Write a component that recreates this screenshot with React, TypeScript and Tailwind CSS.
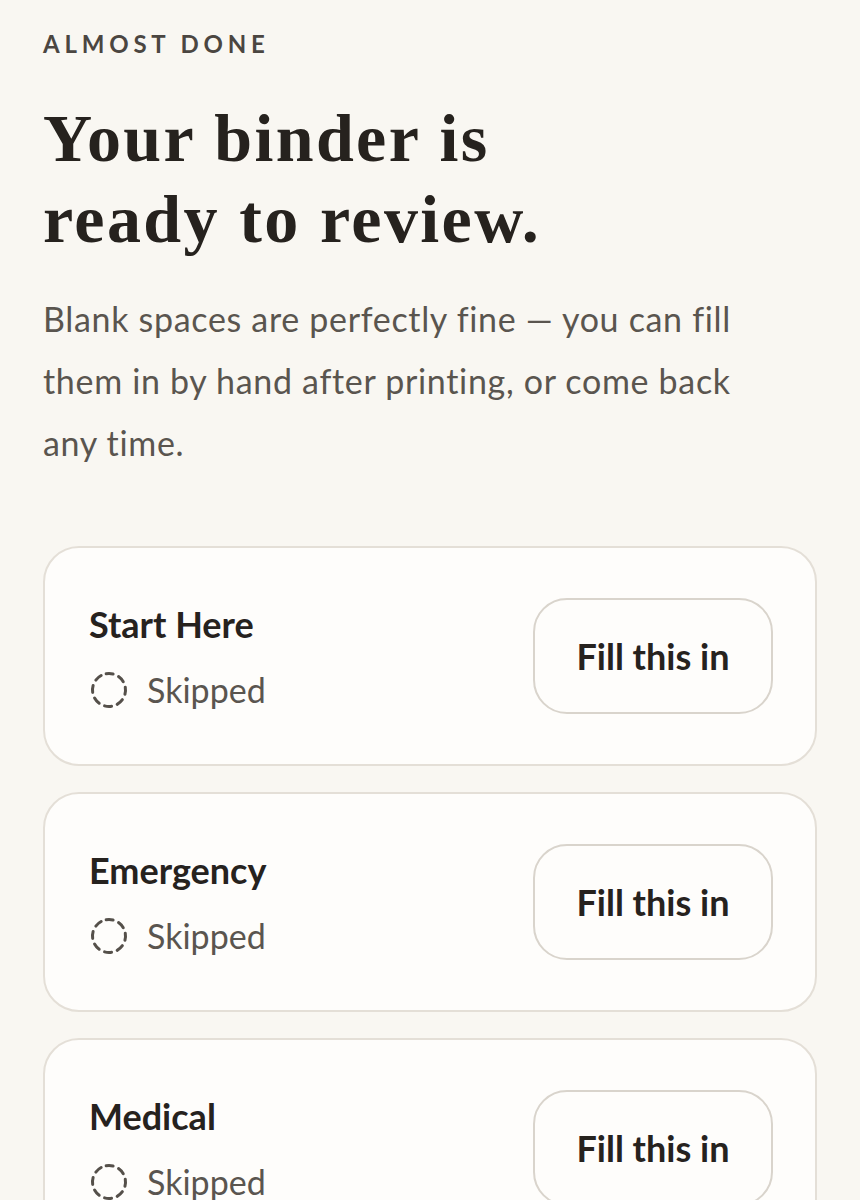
const sections = ["Start Here", "Emergency", "Medical"];

function DashedCircle() {
  return (
    <svg width="40" height="40" viewBox="0 0 40 40" fill="none" className="shrink-0">
      <circle
        cx="20"
        cy="20"
        r="16.5"
        stroke="#55504a"
        strokeWidth="3"
        strokeDasharray="7 5.96"
        strokeLinecap="round"
        transform="rotate(-100 20 20)"
      />
    </svg>
  );
}

function SectionCard({ title }: { title: string }) {
  return (
    <div className="flex items-center justify-between rounded-[36px] border-2 border-[#e4dfd7] bg-[#fefdfb] h-[220px] pl-[44px] pr-[42px]">
      <div className="flex flex-col">
        <h3 className="text-[36px] leading-[44px] font-bold text-[#26221e]">{title}</h3>
        <div className="mt-[24px] flex items-center gap-[18px]">
          <DashedCircle />
          <span className="text-[34px] leading-[40px] text-[#5a554f]">Skipped</span>
        </div>
      </div>
      <button className="h-[116px] w-[240px] rounded-[34px] border-2 border-[#d9d4cc] bg-[#fefdfb] text-[36px] font-bold text-[#26221e]">
        Fill this in
      </button>
    </div>
  );
}

export default function App() {
  return (
    <div
      className="min-h-[1200px] bg-[#f9f7f2] px-[43px] pt-[28px]"
      style={{ fontFamily: "Lato, 'Noto Sans', sans-serif" }}
    >
      <p className="text-[24px] leading-[32px] font-bold tracking-[0.2em] text-[#4b4641]">ALMOST DONE</p>
      <h1
        className="mt-[38px] text-[68px] leading-[81px] font-bold tracking-[0.035em] text-[#26221e]"
        style={{ fontFamily: "'Liberation Serif', serif" }}
      >
        Your binder is
        <br />
        ready to review.
      </h1>
      <p className="mt-[28px] text-[34px] leading-[62px] tracking-[0.02em] text-[#5a554f] max-w-[750px]">
        Blank spaces are perfectly fine — you can fill them in by hand after printing, or come back any time.
      </p>
      <div className="mt-[72px] flex flex-col gap-[26px]">
        {sections.map((s) => (
          <SectionCard key={s} title={s} />
        ))}
      </div>
    </div>
  );
}
